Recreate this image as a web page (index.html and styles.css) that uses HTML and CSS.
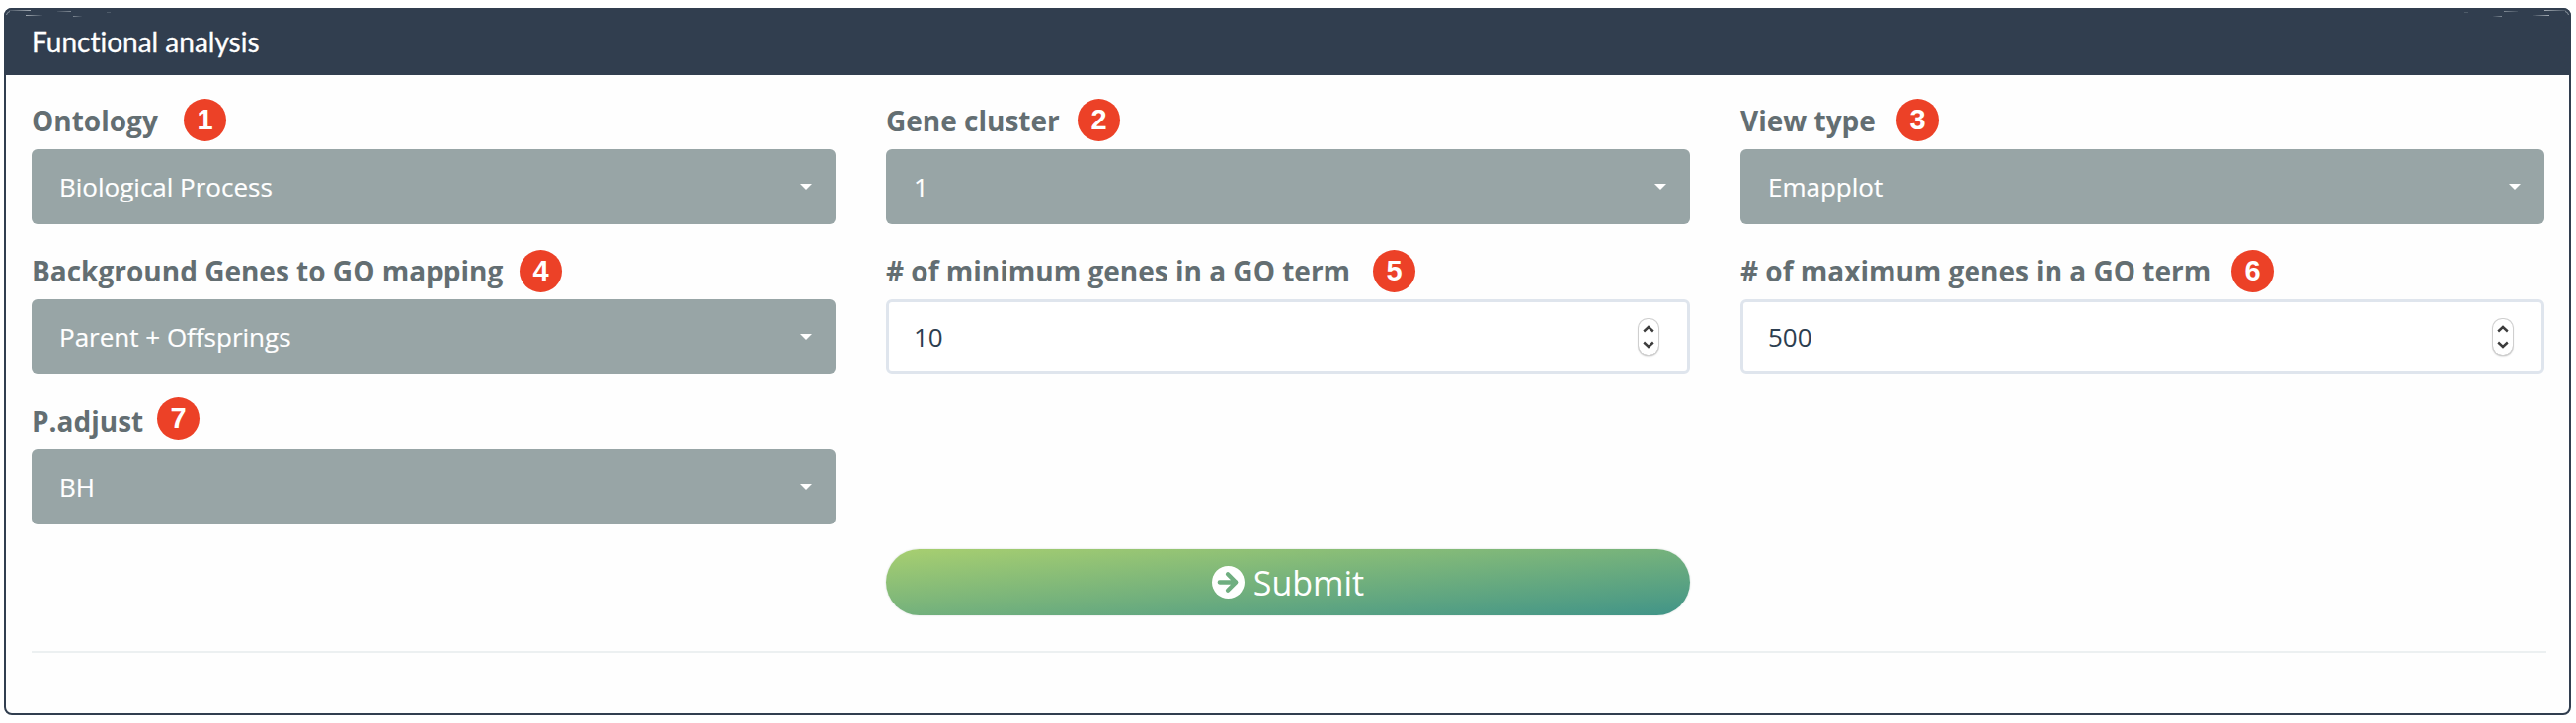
FILE: index.html
```html
<!DOCTYPE html>
<html lang="en">
<head>
<meta charset="utf-8">
<title>Functional analysis</title>
<link rel="stylesheet" href="styles.css">
</head>
<body>
<svg width="0" height="0" class="defs">
  <defs>
    <linearGradient id="fade"><stop offset="0" stop-color="#a3abb3" stop-opacity=".2"/><stop offset="1" stop-color="#a3abb3"/></linearGradient>
    <linearGradient id="fadeout"><stop offset="0" stop-color="#a3abb3"/><stop offset="1" stop-color="#a3abb3" stop-opacity=".1"/></linearGradient>
    <symbol id="glints" viewBox="0 0 130 16">
      <path d="M2.5 7Q3 4 6 3.5" fill="none" stroke="#8b959f"/>
      <rect x="5" y="2" width="22" height="1" fill="url(#fade)"/>
      <rect x="22" y="7" width="17" height="1" fill="url(#fadeout)"/>
      <rect x="54" y="3" width="14" height="1" fill="url(#fade)" opacity=".7"/>
      <rect x="70" y="8" width="9" height="1" fill="url(#fadeout)" opacity=".7"/>
      <rect x="104" y="4" width="4" height="1" fill="#7b8691" opacity=".4"/>
    </symbol>
    <symbol id="stepper" viewBox="0 0 20 36">
      <path d="M5.2 12.5L10 8L14.8 12.5M5.2 23.5L10 28L14.8 23.5" fill="none" stroke="#3d3d3d" stroke-width="2.4"/>
    </symbol>
  </defs>
</svg>
<section class="card">
  <header class="card-header">
    <svg class="glint" width="130" height="16"><use href="#glints"/></svg>
    <svg class="glint glint-right" width="130" height="16"><use href="#glints"/></svg>
    <h1 class="title">Functional analysis</h1>
  </header>
  <form class="card-body">
    <div class="grid">
      <div class="field">
        <div class="label"><span>Ontology</span><b class="badge b1">1</b></div>
        <div class="select"><span>Biological Process</span><i class="caret"></i></div>
      </div>
      <div class="field">
        <div class="label"><span>Gene cluster</span><b class="badge b2">2</b></div>
        <div class="select"><span>1</span><i class="caret"></i></div>
      </div>
      <div class="field">
        <div class="label"><span>View type</span><b class="badge b3">3</b></div>
        <div class="select"><span>Emapplot</span><i class="caret"></i></div>
      </div>
      <div class="field">
        <div class="label"><span>Background Genes to GO mapping</span><b class="badge b4">4</b></div>
        <div class="select"><span>Parent + Offsprings</span><i class="caret"></i></div>
      </div>
      <div class="field">
        <div class="label"><span># of minimum genes in a GO term</span><b class="badge b5">5</b></div>
        <div class="input"><span>10</span><svg class="stepper" width="20" height="36"><use href="#stepper"/></svg></div>
      </div>
      <div class="field">
        <div class="label"><span># of maximum genes in a GO term</span><b class="badge b6">6</b></div>
        <div class="input"><span>500</span><svg class="stepper" width="20" height="36"><use href="#stepper"/></svg></div>
      </div>
      <div class="field">
        <div class="label"><span>P.adjust</span><b class="badge b7">7</b></div>
        <div class="select"><span>BH</span><i class="caret"></i></div>
      </div>
    </div>
    <div class="actions">
      <button type="button" class="submit">
        <svg width="33" height="33" viewBox="0 0 34 34"><circle cx="17" cy="17" r="17" fill="#fff"/><path d="M8 17H25M16.5 8.5L25 17L16.5 25.5" fill="none" stroke="#6fae80" stroke-width="4.4" stroke-linecap="round" stroke-linejoin="round"/></svg>
        <span>Submit</span>
      </button>
    </div>
    <hr class="rule">
  </form>
</section>
</body>
</html>
```
FILE: styles.css
```css
* { box-sizing: border-box; }
body {
  margin: 0;
  padding: 8px 5px 8px 4px;
  background: #fff;
  font-family: "Open Sans", sans-serif;
  font-size: 26px;
}
.defs { position: absolute; }
.card {
  height: 716px;
  border: 2px solid #313e4f;
  border-radius: 8px;
  background: #fefefe;
}
.card-header {
  position: relative;
  display: flex;
  align-items: center;
  height: 68px;
  margin: -2px -2px 0;
  padding-left: 28px;
  border-radius: 8px 8px 0 0;
  background: #313e4f;
}
.glint { position: absolute; top: 0; left: 0; }
.glint-right { left: auto; right: 0; transform: scaleX(-1); }
.title {
  margin: 0;
  color: #fff;
  font-family: Lato, sans-serif;
  font-size: 28px;
  font-weight: 400;
  line-height: 34px;
  font-variant-ligatures: none;
  -webkit-text-stroke: 0.3px #fff;
}
.card-body { padding: 23px 25px 0 26px; }
.grid {
  display: grid;
  grid-template-columns: repeat(3, 1fr);
  column-gap: 51px;
}
.field { height: 152px; }
.label {
  position: relative;
  height: 52px;
  color: #636e72;
  font-size: 28px;
  font-weight: 700;
  line-height: 47px;
  white-space: nowrap;
}
.badge {
  position: absolute;
  top: 1px;
  width: 43px;
  height: 43px;
  border-radius: 50%;
  background: #ec4127;
  color: #fff;
  font: 700 29px/42px "Liberation Sans", sans-serif;
  text-align: center;
}
.b1 { left: 154px; }
.b2 { left: 194px; }
.b3 { left: 158px; }
.b4 { left: 494px; top: 2px; }
.b5 { left: 493px; top: 2px; }
.b6 { left: 497px; top: 2px; }
.b7 { left: 127px; top: -1px; }
.select, .input {
  display: flex;
  align-items: center;
  justify-content: space-between;
  height: 76px;
  padding: 0 24px 1px 28px;
  border-radius: 6px;
}
.select { background: #98a5a6; color: #fff; -webkit-text-stroke: 0.2px #fff; }
.input {
  padding: 0 29px 0 25px;
  border: 3px solid #dfe5ed;
  background: #fff;
  color: #2c3e50;
}
.caret {
  border: 6px solid transparent;
  border-top-color: #fff;
  border-bottom: 0;
}
.stepper {
  border-radius: 9px;
  box-shadow: 0 0 0 1px #cfcfcf, 0 1px 2px #aaa;
}
.actions {
  display: grid;
  grid-template-columns: repeat(3, 1fr);
  column-gap: 51px;
}
.submit {
  grid-column: 2;
  display: flex;
  align-items: center;
  justify-content: center;
  gap: 9px;
  height: 67px;
  margin-top: 1px;
  padding: 0;
  border: 0;
  border-radius: 34px;
  background: linear-gradient(to bottom right, #a8cf70, #419488);
  box-shadow: 0 0 2px #ccd5d0;
  color: #fff;
  font: 400 34px/48px "Open Sans", sans-serif;
}
.rule {
  height: 2px;
  margin: 36px -2px 0 0;
  border: 0;
  background: #ecf0f1;
}
```
